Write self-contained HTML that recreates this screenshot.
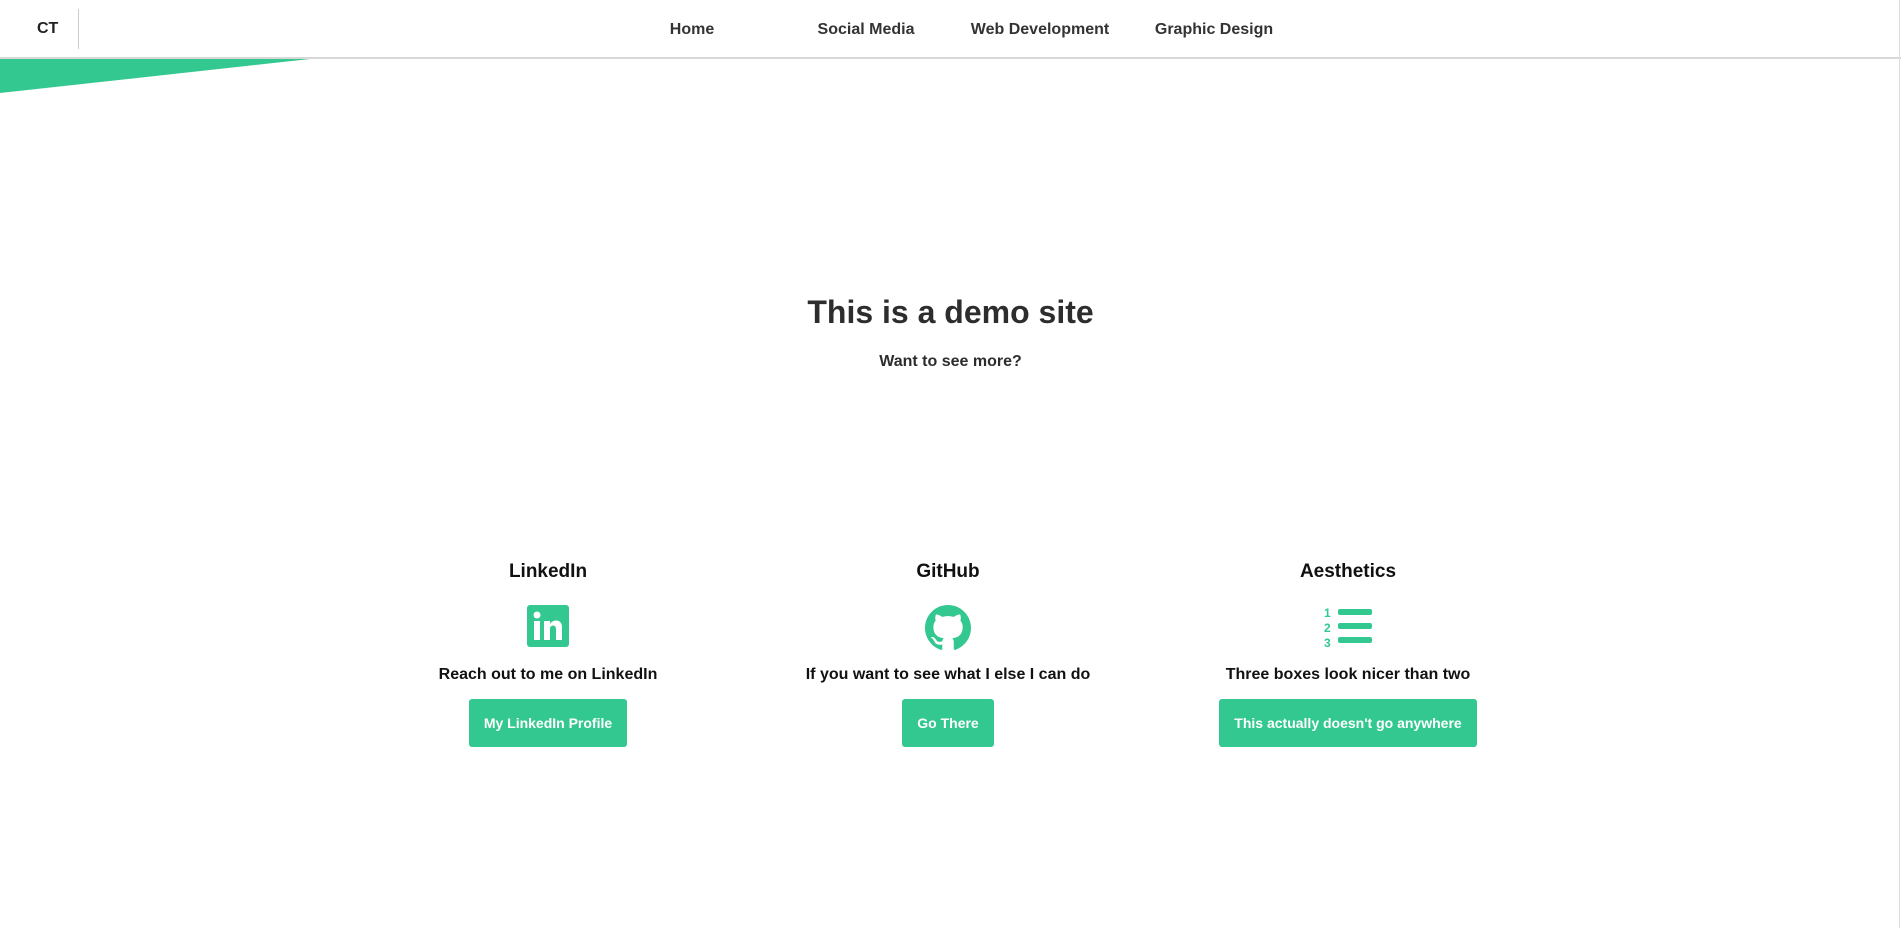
<!DOCTYPE html>
<html><head><meta charset="utf-8"><style>
*{margin:0;padding:0;box-sizing:border-box}
html,body{width:1901px;height:928px;overflow:hidden;background:#fff;font-family:"Liberation Sans",sans-serif;color:#222}
.hdr{position:absolute;left:0;top:0;width:1901px;height:59px;border-bottom:2px solid #d8d8d8;background:#fff}
.ct{position:absolute;left:37px;top:20px;font-weight:bold;font-size:16px}
.div{position:absolute;left:78px;top:9px;width:1px;height:40px;background:#ccc}
.nav a{position:absolute;top:21px;font-weight:bold;font-size:16px;color:#333;text-decoration:none;white-space:nowrap;transform:translateX(-50%)}
.rb{position:absolute;right:1px;top:0;width:1px;height:928px;background:#ddd}
.tri{position:absolute;left:0;top:59px}
h1{position:absolute;left:0;width:1901px;top:294px;text-align:center;font-size:32px;color:#2d2d2d}
.sub{position:absolute;left:0;width:1901px;top:353px;text-align:center;font-size:16px;font-weight:bold;color:#2d2d2d}
.col{position:absolute;top:561px;width:400px;margin-left:-200px;text-align:center}
.col h3{font-size:19px;color:#111;height:44px}
.ic{height:44px;display:flex;justify-content:center}
.col p{font-size:16px;font-weight:bold;color:#111;margin-top:17px}
.btn{display:inline-block;margin-top:15px;height:48px;line-height:48px;padding:0 15px;background:#34c891;color:#fff;font-weight:bold;font-size:14px;border-radius:3px}
</style></head><body>
<div class="hdr">
<div class="ct">CT</div><div class="div"></div>
<div class="nav">
<a style="left:692px">Home</a>
<a style="left:866px">Social Media</a>
<a style="left:1040px">Web Development</a>
<a style="left:1214px">Graphic Design</a>
</div></div>
<div class="rb"></div>
<svg class="tri" width="310" height="34"><polygon points="0,0 310,0 0,34" fill="#34c891"/></svg>
<h1>This is a demo site</h1>
<div class="sub">Want to see more?</div>

<div class="col" style="left:548px">
<h3>LinkedIn</h3>
<div class="ic"><svg width="42" height="42" viewBox="0 0 42 42"><rect width="42" height="42" rx="3" fill="#34c891"/><rect x="7" y="16" width="6" height="19" fill="#fff"/><circle cx="10" cy="10" r="3.5" fill="#fff"/><path d="M17 16h6v3c1.5-2.5 4-3.5 6-3.5 4 0 6 2.5 6 7V35h-6V24c0-2-1-3.5-3-3.5s-3 1.5-3 3.5v11h-6z" fill="#fff"/></svg></div>
<p>Reach out to me on LinkedIn</p>
<span class="btn">My LinkedIn Profile</span>
</div>

<div class="col" style="left:948px">
<h3>GitHub</h3>
<div class="ic"><svg width="46" height="46" viewBox="0 0 16 16"><path fill="#34c891" d="M8 0C3.58 0 0 3.58 0 8c0 3.54 2.29 6.530 5.47 7.59.4.07.55-.17.55-.38 0-.19-.01-.82-.01-1.49-2.01.37-2.530-.49-2.69-.94-.09-.23-.48-.94-.82-1.13-.28-.15-.68-.52-.01-.53.63-.01 1.08.58 1.23.82.72 1.21 1.87.87 2.330.66.07-.52.28-.87.51-1.07-1.78-.2-3.64-.89-3.64-3.95 0-.87.31-1.59.82-2.15-.08-.2-.36-1.02.08-2.12 0 0 .67-.21 2.2.82.64-.18 1.32-.27 2-.27.68 0 1.36.09 2 .27 1.53-1.04 2.2-.82 2.2-.82.44 1.1.16 1.92.08 2.12.51.56.82 1.27.82 2.15 0 3.07-1.87 3.75-3.65 3.95.29.25.54.73.54 1.48 0 1.07-.01 1.93-.01 2.2 0 .21.15.46.55.38A8.013 8.013 0 0016 8c0-4.42-3.58-8-8-8z"/></svg></div>
<p>If you want to see what I else I can do</p>
<span class="btn">Go There</span>
</div>

<div class="col" style="left:1348px">
<h3>Aesthetics</h3>
<div class="ic"><svg width="50" height="44" viewBox="0 0 50 44"><g fill="#34c891" font-family="Liberation Sans" font-weight="bold" font-size="12"><text x="1" y="12">1</text><text x="1" y="27">2</text><text x="1" y="42">3</text></g><g fill="#34c891"><rect x="15" y="4" width="34" height="6" rx="2"/><rect x="15" y="18" width="34" height="6" rx="2"/><rect x="15" y="32" width="34" height="6" rx="2"/></g></svg></div>
<p>Three boxes look nicer than two</p>
<span class="btn">This actually doesn't go anywhere</span>
</div>
</body></html>
